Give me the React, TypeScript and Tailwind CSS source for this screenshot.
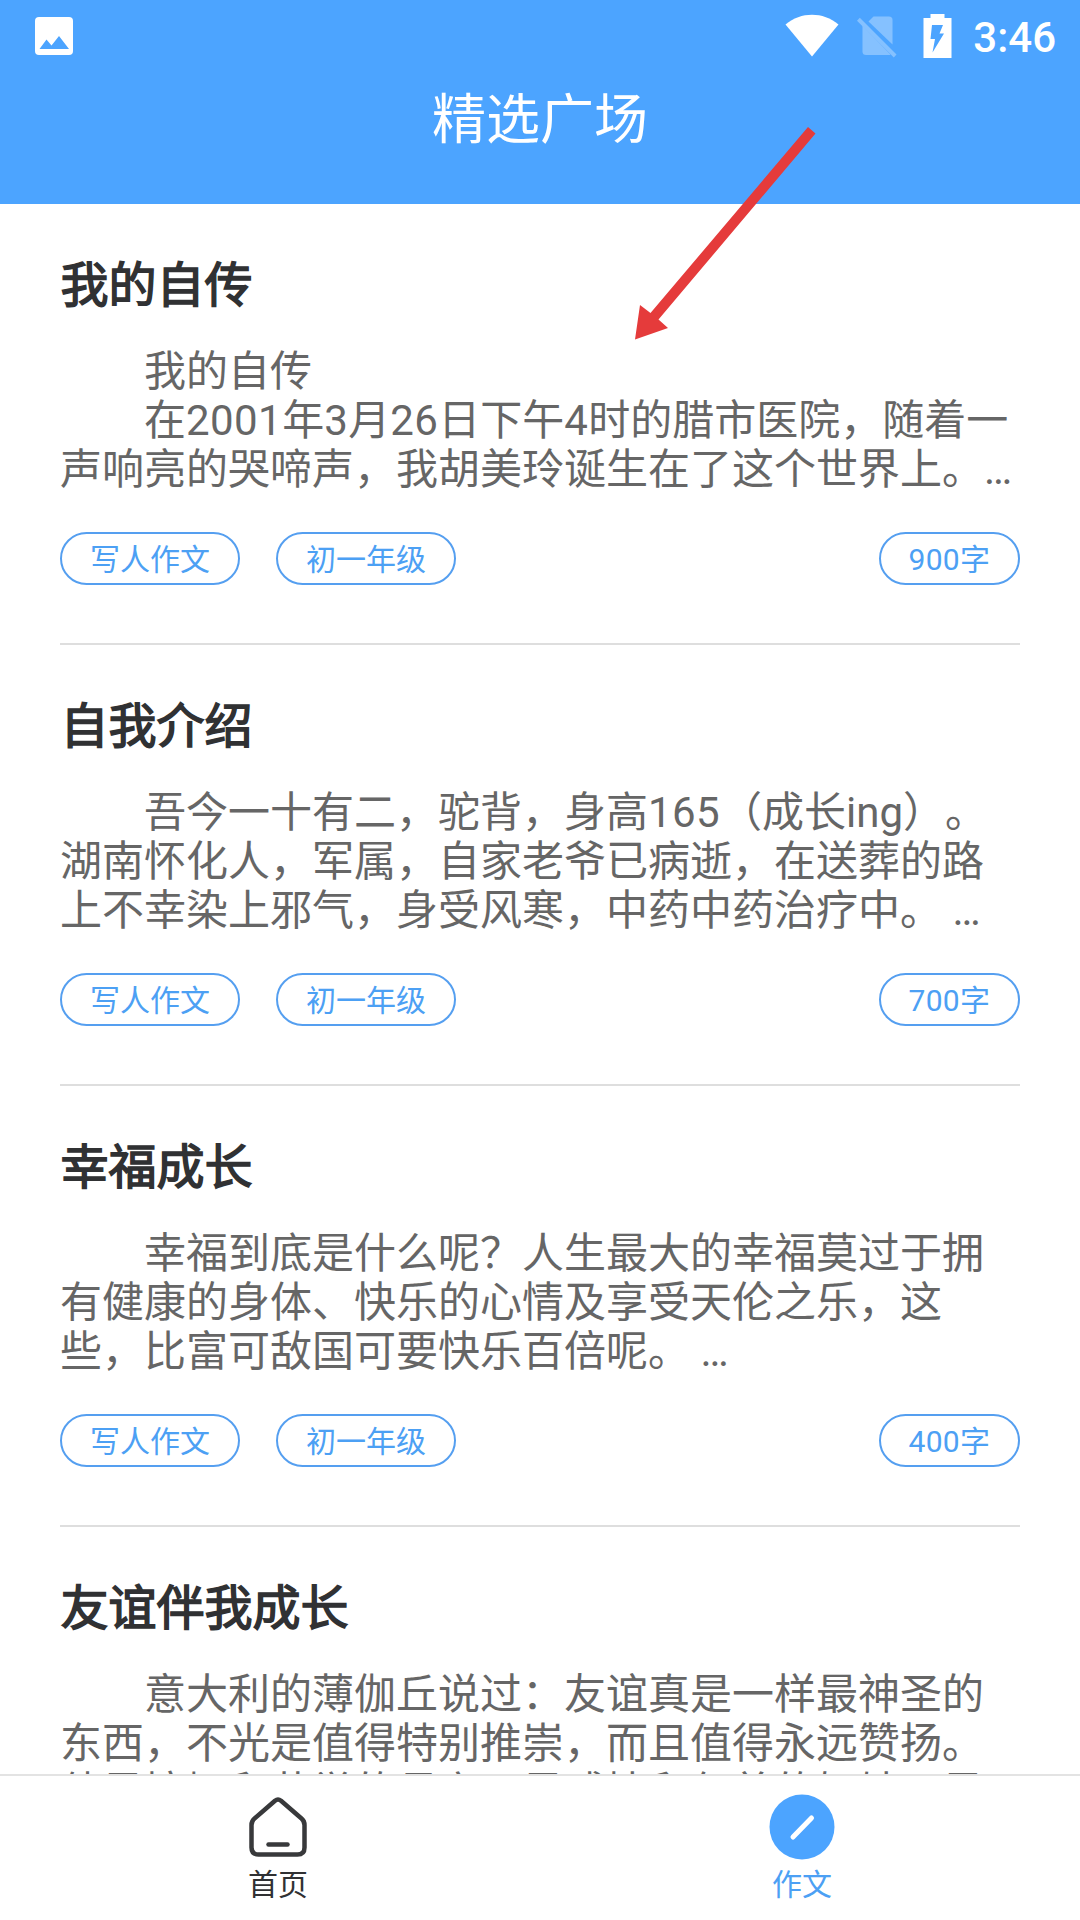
import React from "react";

interface Essay {
  title: string;
  lines: string[];
  tags?: string[];
  words?: string;
}

// two full-width spaces open every paragraph
const essays: Essay[] = [
  {
    title: "我的自传",
    lines: [
      "  我的自传",
      "  在2001年3月26日下午4时的腊市医院,随着一",
      "声响亮的哭啼声,我胡美玲诞生在了这个世界上。…",
    ],
    tags: ["写人作文", "初一年级"],
    words: "900字",
  },
  {
    title: "自我介绍",
    lines: [
      "  吾今一十有二,驼背,身高165(成长ing)。",
      "湖南怀化人,军属,自家老爷已病逝,在送葬的路",
      "上不幸染上邪气,身受风寒,中药中药治疗中。 …",
    ],
    tags: ["写人作文", "初一年级"],
    words: "700字",
  },
  {
    title: "幸福成长",
    lines: [
      "  幸福到底是什么呢?人生最大的幸福莫过于拥",
      "有健康的身体、快乐的心情及享受天伦之乐,这",
      "些,比富可敌国可要快乐百倍呢。 …",
    ],
    tags: ["写人作文", "初一年级"],
    words: "400字",
  },
  {
    title: "友谊伴我成长",
    lines: [
      "  意大利的薄伽丘说过:友谊真是一样最神圣的",
      "东西,不光是值得特别推崇,而且值得永远赞扬。",
      "他是慷慨和荣誉的母亲,是感情和仁慈的姐妹,是",
    ],
  },
].map((essay) => ({
  ...essay,
  lines: essay.lines.map((line) =>
    line
      .replace(/^ {2}/, "\u3000\u3000")
      .replace(/,/g, "\uff0c")
      .replace(/:/g, "\uff1a")
      .replace(/\?/g, "\uff1f")
      .replace(/\(/g, "\uff08")
      .replace(/\)/g, "\uff09")
  ),
}));

// digits sit a little wider than the rest of the line
function Digits({ text }: { text: string }) {
  return (
    <>
      {text.split(/(\d+)/).map((part, i) =>
        i % 2 ? (
          <span key={i} className="tracking-[0.01em]">
            {part}
          </span>
        ) : (
          part
        )
      )}
    </>
  );
}

function StatusBar() {
  return (
    <div className="flex h-[72px] items-start justify-between text-white">
      <svg className="mt-[17px] ml-[35px] h-[38px] w-[38px]" viewBox="0 0 38 38">
        <rect width="38" height="38" rx="4" fill="currentColor" />
        <path d="M4.5 32L11.5 22.5L16.5 28.5L24 19L34 32Z" fill="#4ca4ff" />
      </svg>
      <div className="flex items-start">
        <svg className="mt-[14px] mr-[18px] h-[43px] w-[54px]" viewBox="0 0 54 43" fill="currentColor">
          <path d="M0.5 10.5C16 -2.5 38 -2.5 53.5 10.5L27 42.5Z" />
        </svg>
        <svg className="mt-[15px] mr-[26px] h-[44px] w-[40px]" viewBox="0 0 40 44">
          <g fill="#85c1ff">
            <path d="M16.5 1.5H32Q35.5 1.5 35.5 5V29.5L11.5 6.5Z" />
            <path d="M5.5 10.5L33.5 39.5Q32.8 40 32 40H9Q5.5 40 5.5 36.5Z" />
            <path d="M2.8 2.8L39.5 39.5L36.8 42.5L0 5.7Z" />
          </g>
        </svg>
        <svg className="mt-[14px] mr-[21px] h-[44px] w-[29px]" viewBox="0 0 29 44">
          <path d="M7.5 0H21.5V4H28.5V44H0.5V4H7.5Z" fill="currentColor" />
          <path d="M9 11H20L16.5 19.5H21L9.5 38.5L12 25H7.5Z" fill="#4ca4ff" />
        </svg>
        <span className="mr-6 font-[Roboto] text-[42px] leading-[75px] font-medium">3:46</span>
      </div>
    </div>
  );
}

function Tag({ children }: { children: string }) {
  return (
    <span className="flex h-[53px] items-center rounded-full border-2 border-[#559ff0] px-7 pt-[3px] text-[30px] leading-none text-[#4ca0f4]">
      <span>
        <Digits text={children} />
      </span>
    </span>
  );
}

function EssayItem({ essay }: { essay: Essay }) {
  return (
    <article className="h-[441px] border-b-2 border-[#dedede] pt-[47px]">
      <h2 className="h-[70px] pl-[0.5px] text-[48px] leading-[70px] text-[#303133] [-webkit-text-stroke:1.5px_#303133]">
        {essay.title}
      </h2>
      <div className="mt-[26px] text-[42px] leading-[49px] whitespace-nowrap text-[#666] [text-spacing-trim:space-all]">
        {essay.lines.map((line) => (
          <p key={line} className="h-[49px]">
            <Digits text={line} />
          </p>
        ))}
      </div>
      <div className="mt-[38px] flex gap-9">
        {essay.tags?.map((tag) => (
          <Tag key={tag}>{tag}</Tag>
        ))}
        {essay.words && (
          <div className="ml-auto">
            <Tag>{essay.words}</Tag>
          </div>
        )}
      </div>
    </article>
  );
}

function TabBar() {
  return (
    <nav className="flex h-[146px] shrink-0 border-t-2 border-[#e3e3e3] bg-white text-[30px] leading-[44px]">
      <div className="flex w-[556px] flex-col items-center text-[#303133]">
        <svg className="mt-[20px] h-[62px] w-[62px]" viewBox="0 0 62 62" fill="none" stroke="#38393b" strokeLinecap="round" strokeLinejoin="round">
          <path d="M28 4.700Q31 2.300 34 4.700L54.500 22.500Q57.500 25 57.500 29V51.500Q57.500 58.500 50.500 58.500H11.500Q4.500 58.500 4.500 51.500V29Q4.500 25 7.500 22.500Z" strokeWidth="4.500" />
          <path d="M21.500 48.500H40.500" strokeWidth="4.500" />
        </svg>
        <span className="mt-[5px]">首页</span>
      </div>
      <div className="flex w-[492px] flex-col items-center text-[#4ca0f4]">
        <svg className="mt-[18px] h-[66px] w-[66px]" viewBox="0 0 66 66">
          <circle cx="33" cy="33" r="32.5" fill="#4ca4ff" />
          <path d="M24 43L42.5 24" stroke="white" strokeWidth="5" strokeLinecap="round" />
        </svg>
        <span className="mt-[3px]">作文</span>
      </div>
    </nav>
  );
}

export default function App() {
  return (
    <div className="relative flex h-[1920px] w-[1080px] flex-col overflow-hidden bg-white font-[Roboto,'Noto_Sans_CJK_SC',sans-serif]">
      <header className="h-[204px] shrink-0 bg-[#4ca4ff]">
        <StatusBar />
        <h1 className="text-center text-[54px] leading-[98px] text-white">精选广场</h1>
      </header>
      <main className="min-h-0 flex-1 overflow-hidden px-[60px]">
        {essays.map((essay) => (
          <EssayItem key={essay.title} essay={essay} />
        ))}
      </main>
      <TabBar />
      {/* pointer arrow towards the first essay */}
      <svg className="pointer-events-none absolute top-[126px] left-[634px] h-[214px] w-[182px]" viewBox="0 0 182 214">
        <path d="M174 1L181.5 7.5L24.5 193.5L34 202L1 213.5L6 179L16.5 187Z" fill="#e53b3b" />
      </svg>
    </div>
  );
}
